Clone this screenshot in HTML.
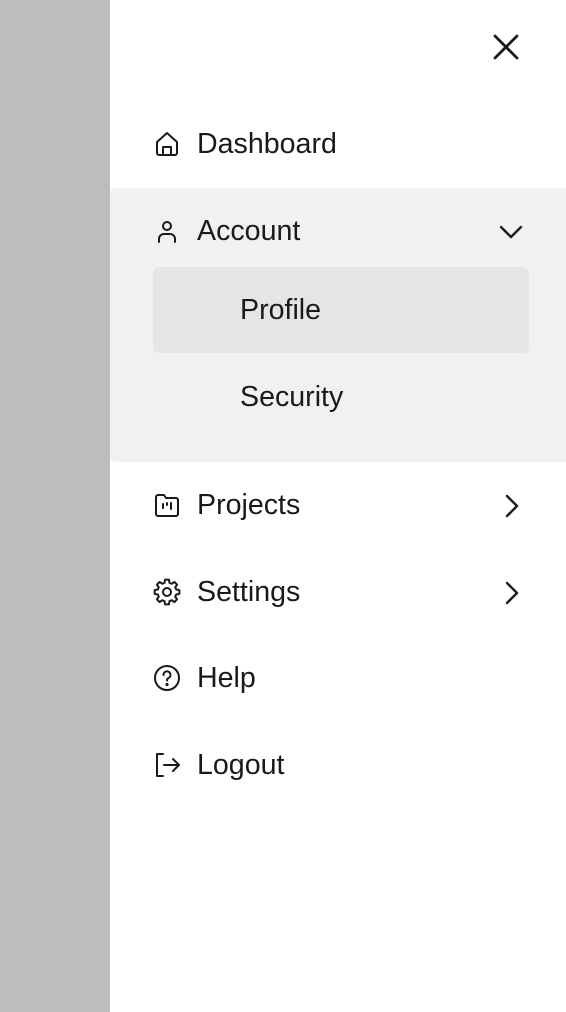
<!DOCTYPE html>
<html><head><style>
*{margin:0;padding:0;box-sizing:border-box}
body{width:566px;height:1012px;position:relative;background:#bdbdbd;font-family:"Liberation Sans",sans-serif;color:#1a1a1a;overflow:hidden}
.panel{position:absolute;left:110px;top:0;width:456px;height:1012px;background:#fff}
.acc{position:absolute;left:110px;top:188px;width:456px;height:274px;background:#f1f1f1;border-radius:6px 0 0 6px}
.prof{position:absolute;left:153px;top:267px;width:376px;height:86px;background:#e5e5e5;border-radius:6px}
.t{position:absolute;font-size:28.6px;line-height:30px}
.i{position:absolute;left:152px;width:30px;height:30px}
svg{fill:none;stroke:#1a1a1a;stroke-width:2;stroke-linecap:round;stroke-linejoin:round}
</style></head><body>
<div class="panel"></div>
<div class="acc"></div>
<div class="prof"></div>
<svg style="position:absolute;left:491px;top:32px" width="30" height="30" viewBox="0 0 30 30"><path d="M4 4L26 26M26 4L4 26" style="stroke-width:2.8"/></svg>

<svg class="i" style="top:129px" viewBox="0 0 30 30"><path d="M5 13L15 4L25 13V24a2 2 0 0 1-2 2H7a2 2 0 0 1-2-2z"/><path d="M11 26V18h8v8"/></svg>
<div class="t" style="left:197px;top:129px">Dashboard</div>

<svg class="i" style="top:216px" viewBox="0 0 30 30"><circle cx="15" cy="10" r="4"/><path d="M7 26v-3a5 5 0 0 1 5-5h6a5 5 0 0 1 5 5v3"/></svg>
<div class="t" style="left:197px;top:216px">Account</div>
<svg style="position:absolute;left:498px;top:219px" width="26" height="26" viewBox="0 0 26 26"><path d="M3 8l10 10 10-10" style="stroke-width:2.4"/></svg>

<div class="t" style="left:240px;top:295px">Profile</div>
<div class="t" style="left:240px;top:382px">Security</div>

<svg class="i" style="top:490px" viewBox="0 0 30 30"><path d="M4 7a2 2 0 0 1 2-2h6l2 3h10a2 2 0 0 1 2 2v14a2 2 0 0 1-2 2H6a2 2 0 0 1-2-2z"/><path d="M11 14v4M15 13v2M19 13v6"/></svg>
<div class="t" style="left:197px;top:490px">Projects</div>
<svg style="position:absolute;left:498px;top:493px" width="26" height="26" viewBox="0 0 26 26"><path d="M9 3l10 10-10 10" style="stroke-width:2.4"/></svg>

<svg class="i" style="top:577px" viewBox="0 0 30 30"><path d="M12.54 5.82L13.05 2.65L16.95 2.65L17.46 5.82L19.75 6.77L22.35 4.89L25.11 7.65L23.23 10.25L24.18 12.54L27.35 13.05L27.35 16.95L24.18 17.46L23.23 19.75L25.11 22.35L22.35 25.11L19.75 23.23L17.46 24.18L16.95 27.35L13.05 27.35L12.54 24.18L10.25 23.23L7.65 25.11L4.89 22.35L6.77 19.75L5.82 17.46L2.65 16.95L2.65 13.05L5.82 12.54L6.77 10.25L4.89 7.65L7.65 4.89L10.25 6.77Z"/><circle cx="15" cy="15" r="4"/></svg>
<div class="t" style="left:197px;top:577px">Settings</div>
<svg style="position:absolute;left:498px;top:580px" width="26" height="26" viewBox="0 0 26 26"><path d="M9 3l10 10-10 10" style="stroke-width:2.4"/></svg>

<svg class="i" style="top:663px" viewBox="0 0 30 30"><circle cx="15" cy="15" r="12"/><path d="M11.5 12a3.5 3.5 0 1 1 5 3c-1 .6-1.5 1.2-1.5 2.5"/><circle cx="15" cy="21.5" r=".6" fill="#1a1a1a"/></svg>
<div class="t" style="left:197px;top:663px">Help</div>

<svg class="i" style="top:750px" viewBox="0 0 30 30"><path d="M11 4H5v22h6"/><path d="M12 15h15M21 9l6 6-6 6"/></svg>
<div class="t" style="left:197px;top:750px">Logout</div>
</body></html>
